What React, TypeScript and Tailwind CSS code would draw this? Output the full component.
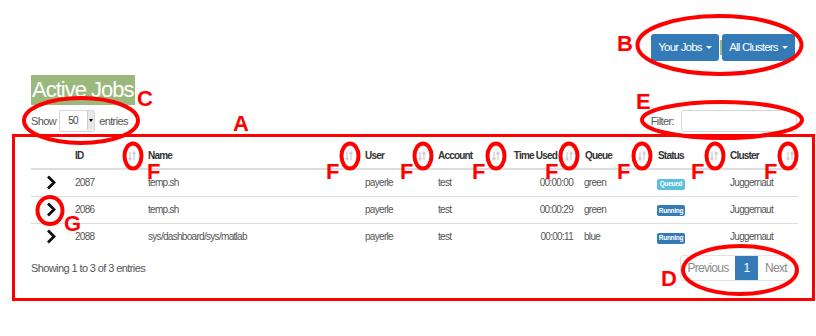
import React from 'react'

const font = { fontFamily: '"Liberation Sans", Arial, sans-serif' }

interface Job {
  id: string
  name: string
  user: string
  account: string
  time: string
  queue: string
  status: 'Queued' | 'Running'
  cluster: string
}

const jobs: Job[] = [
  { id: '2087', name: 'temp.sh', user: 'payerle', account: 'test', time: '00:00:00', queue: 'green', status: 'Queued', cluster: 'Juggernaut' },
  { id: '2086', name: 'temp.sh', user: 'payerle', account: 'test', time: '00:00:29', queue: 'green', status: 'Running', cluster: 'Juggernaut' },
  { id: '2088', name: 'sys/dashboard/sys/matlab', user: 'payerle', account: 'test', time: '00:00:11', queue: 'blue', status: 'Running', cluster: 'Juggernaut' },
]

function SortIcon() {
  return (
    <svg width="8" height="10" viewBox="0 0 8 10" className="absolute right-[4px] top-[8px]">
      <path d="M2 1 V9 M0.5 7 L2 9 L3.5 7" stroke="#cfcfcf" strokeWidth="1.3" fill="none" />
      <path d="M6 9 V1 M4.5 3 L6 1 L7.5 3" stroke="#cfcfcf" strokeWidth="1.3" fill="none" />
    </svg>
  )
}

function Chevron() {
  return (
    <svg width="10" height="15" viewBox="0 0 10 15">
      <path d="M2 1.5 L8 7.5 L2 13.5" stroke="#111" strokeWidth="2.8" fill="none" />
    </svg>
  )
}

function Caret() {
  return <span className="ml-[4px] inline-block h-0 w-0 border-x-[3px] border-t-[3px] border-x-transparent border-t-white align-middle" />
}

function Th({ label, right }: { label: string; right?: boolean }) {
  return (
    <th className={`relative h-[26px] border-b-2 border-[#dddddd] p-0 align-middle text-[10px] font-bold tracking-[-0.8px] text-[#333] ${right ? 'pr-[20px] text-right' : 'pl-[8px] text-left'}`}>
      {label}
      <SortIcon />
    </th>
  )
}

// red review markings drawn over the page
function Annotations() {
  const fx = [133, 350, 423, 496, 569, 642, 715, 788]
  const fl = [147, 326, 400, 472, 545, 617, 691, 764]
  const letter = { fontFamily: '"Liberation Sans", Arial, sans-serif', fontWeight: 700, fontSize: 22 }
  return (
    <svg width="816" height="336" viewBox="0 0 816 336" className="pointer-events-none absolute left-0 top-0">
      <g fill="none" stroke="#ff0000">
        <rect x="13.5" y="135.5" width="800" height="164" strokeWidth="3" />
        <ellipse cx="719.5" cy="45" rx="82" ry="29" strokeWidth="4" />
        <ellipse cx="81" cy="120.5" rx="57" ry="22.5" strokeWidth="4" />
        <ellipse cx="722" cy="120" rx="80" ry="18" strokeWidth="4" />
        <ellipse cx="740" cy="270" rx="57" ry="24" strokeWidth="4" />
        <ellipse cx="50" cy="210.5" rx="12.5" ry="13.5" strokeWidth="4" />
        {fx.map((x) => (
          <ellipse key={x} cx={x} cy="156" rx="8.5" ry="12.5" strokeWidth="4" />
        ))}
      </g>
      <g fill="#ff0000" style={letter}>
        <text x="617" y="51">B</text>
        <text x="137" y="106">C</text>
        <text x="233" y="131">A</text>
        <text x="636" y="109">E</text>
        <text x="661" y="286">D</text>
        <text x="64" y="231">G</text>
        {fl.map((x) => (
          <text key={x} x={x} y="179">F</text>
        ))}
      </g>
    </svg>
  )
}

export default function App() {
  return (
    <div className="relative h-[336px] w-[816px] overflow-hidden bg-white pl-[31px] text-[#333]" style={font}>
      <div className="w-[767px]">
        {/* job / cluster pickers */}
        <div className="flex justify-end pr-[3px] pt-[34px]">
          <div className="flex items-center">
            <button className="flex h-[27px] w-[68px] items-center justify-center rounded-[3px] bg-[#337ab7] text-[11.5px] tracking-[-0.8px] text-white">
              Your Jobs
              <Caret />
            </button>
            <div className="flex w-[3px] justify-center">
              <div className="h-[15px] w-[2px] bg-[#9cb97d]" />
            </div>
            <button className="flex h-[27px] w-[73px] items-center justify-center rounded-[3px] bg-[#337ab7] text-[11.5px] tracking-[-0.8px] text-white">
              All Clusters
              <Caret />
            </button>
          </div>
        </div>

        <h1 className="mt-[14px] inline-block h-[30px] bg-[#9cb97d] pl-[1px] pr-[1px] text-[22px] leading-[30px] font-normal tracking-[-1px] text-white">
          Active Jobs
        </h1>

        <div className="mt-[5px] flex h-[22px] items-center justify-between pr-[1px] text-[11px] tracking-[-0.6px] text-[#555]">
          <div className="flex items-center">
            <span>Show</span>
            <div className="ml-[3px] mr-[4px] flex h-[22px] w-[36px] items-stretch rounded-[2px] border border-[#d6d6d6] bg-white">
              <span className="flex-1 pl-[8px] text-[10px] leading-[20px] text-[#444]">50</span>
              <span className="mb-[1px] flex w-[7px] items-center justify-center border-l border-[#ccc] bg-[#e8e8e8]">
                <span className="inline-block h-0 w-0 border-x-[2px] border-t-[3px] border-x-transparent border-t-black" />
              </span>
            </div>
            <span>entries</span>
          </div>
          <div className="flex items-center">
            <span>Filter:</span>
            <div className="ml-[7px] h-[22px] w-[116px] rounded-[3px] border border-[#d6d6d6] bg-white" />
          </div>
        </div>

        <table className="mt-[11px] w-[767px] table-fixed border-collapse">
          <colgroup>
            <col className="w-[36px]" />
            <col className="w-[73px]" />
            <col className="w-[217px]" />
            <col className="w-[73px]" />
            <col className="w-[74px]" />
            <col className="w-[73px]" />
            <col className="w-[73px]" />
            <col className="w-[72px]" />
            <col className="w-[76px]" />
          </colgroup>
          <thead>
            <tr>
              <th className="border-b-2 border-[#dddddd] p-0" />
              <Th label="ID" />
              <Th label="Name" />
              <Th label="User" />
              <Th label="Account" />
              <Th label="Time Used" right />
              <Th label="Queue" />
              <Th label="Status" />
              <Th label="Cluster" />
            </tr>
          </thead>
          <tbody className="text-[10px] tracking-[-0.7px] text-[#555]">
            {jobs.map((job, i) => (
              <tr key={job.id} className={`h-[27px] ${i > 0 ? 'border-t border-[#dddddd]' : ''}`}>
                <td className="p-0 pl-[15px] align-middle">
                  <div className="flex items-center">
                    <Chevron />
                  </div>
                </td>
                <td className="pl-[8px]">{job.id}</td>
                <td className="pl-[8px]">{job.name}</td>
                <td className="pl-[8px]">{job.user}</td>
                <td className="pl-[8px]">{job.account}</td>
                <td className="pr-[4px] text-right">{job.time}</td>
                <td className="pl-[7px]">{job.queue}</td>
                <td className="pl-[7px]">
                  <span
                    className={`inline-flex h-[11px] w-[28px] items-center justify-center rounded-[2px] text-[6.5px] font-bold tracking-[-0.3px] text-white ${job.status === 'Queued' ? 'bg-[#5bc0de]' : 'bg-[#337ab7]'}`}
                  >
                    {job.status}
                  </span>
                </td>
                <td className="pl-[8px]">{job.cluster}</td>
              </tr>
            ))}
          </tbody>
        </table>

        <div className="mt-[5px] flex h-[26px] items-center justify-between pr-[3px]">
          <span className="text-[11px] tracking-[-0.6px] text-[#555]">Showing 1 to 3 of 3 entries</span>
          <div className="flex h-[26px] rounded-[3px] border border-[#e3e3e3] text-[12px] tracking-[-0.7px]">
            <span className="flex w-[54px] items-center justify-center text-[#8a8a8a]">Previous</span>
            <span className="flex w-[23px] items-center justify-center bg-[#337ab7] text-white">1</span>
            <span className="flex w-[36px] items-center justify-center text-[#8a8a8a]">Next</span>
          </div>
        </div>
      </div>

      <Annotations />
    </div>
  )
}
